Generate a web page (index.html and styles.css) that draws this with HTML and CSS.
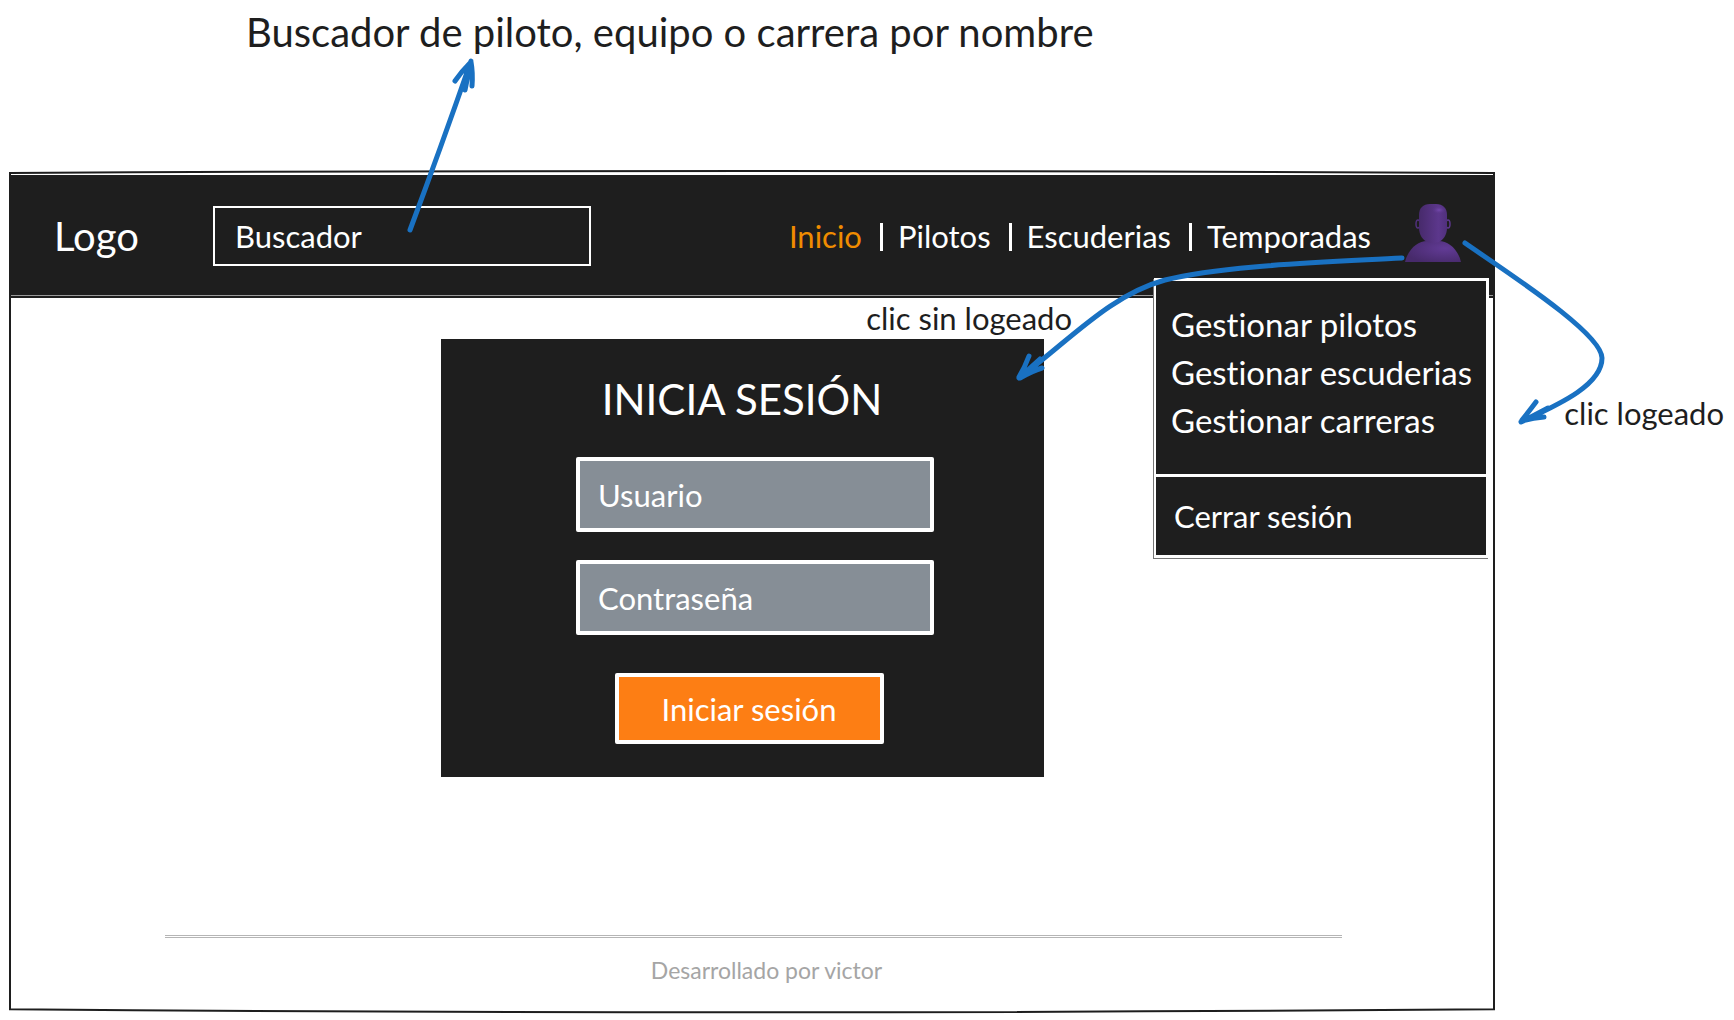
FILE: index.html
```
<!DOCTYPE html>
<html lang="es">
<head>
<meta charset="utf-8">
<meta name="viewport" content="width=device-width, initial-scale=1">
<title>Inicia sesión</title>
<link rel="stylesheet" href="styles.css">
</head>
<body>
<p class="note note-title">Buscador de piloto, equipo o carrera por nombre</p>

<div class="frame">
  <svg class="frame-outline" viewBox="0 0 100 100" preserveAspectRatio="none" aria-hidden="true">
    <path d="M0 0 Q50 -.5 100 0 V99.8 Q50 100.5 0 99.8 Z"/>
  </svg>

  <header class="topbar">
    <a class="logo" href="#">Logo</a>
    <input class="search" type="search" placeholder="Buscador" aria-label="Buscador">
    <nav class="nav">
      <a class="active" href="#">Inicio</a>
      <a href="#">Pilotos</a>
      <a href="#">Escuderias</a>
      <a href="#">Temporadas</a>
    </nav>
    <button class="user" type="button" aria-label="Usuario">
      <svg width="56" height="58" viewBox="0 0 56 58" aria-hidden="true">
        <defs>
          <linearGradient id="head" x1="0" y1="0" x2="1" y2="0">
            <stop offset="0" stop-color="#472a6b"/>
            <stop offset=".7" stop-color="#5c378c"/>
            <stop offset="1" stop-color="#50307c"/>
          </linearGradient>
          <radialGradient id="body" cx=".72" cy=".35" r=".75">
            <stop offset="0" stop-color="#623b96"/>
            <stop offset="1" stop-color="#472a6b"/>
          </radialGradient>
          <radialGradient id="shine">
            <stop offset="0" stop-color="#7448ad"/>
            <stop offset="1" stop-color="#5c378c" stop-opacity="0"/>
          </radialGradient>
        </defs>
        <ellipse cx="13" cy="20" rx="2" ry="4" fill="none" stroke="#50307c" stroke-width="1.5"/>
        <ellipse cx="43" cy="20" rx="2" ry="4" fill="none" stroke="#5c378c" stroke-width="1.5"/>
        <path d="M0 58C3 45 13 37 22 37h12c9 0 19 8 22 21Z" fill="url(#body)"/>
        <path d="M14 11C14 4 18 0 25 0h6c7 0 11 4 11 11v13c0 7-4 12-8 14q-6 2-12 0c-4-2-8-7-8-14Z" fill="url(#head)"/>
        <ellipse cx="34" cy="6" rx="7" ry="4" fill="url(#shine)"/>
      </svg>
    </button>
  </header>

  <div class="menu">
    <ul>
      <li><a href="#">Gestionar pilotos</a></li>
      <li><a href="#">Gestionar escuderias</a></li>
      <li><a href="#">Gestionar carreras</a></li>
    </ul>
    <button type="button">Cerrar sesión</button>
  </div>

  <main>
    <form class="login">
      <h1>INICIA SESIÓN</h1>
      <input type="text" placeholder="Usuario" aria-label="Usuario">
      <input type="password" placeholder="Contraseña" aria-label="Contraseña">
      <button type="button">Iniciar sesión</button>
    </form>
  </main>

  <footer>Desarrollado por victor</footer>

  <svg class="arrow arrow-search" width="80" height="190" viewBox="400 50 80 190" aria-hidden="true">
    <path d="M410 230Q440 150 471 61L465 90M455 81Q461 72 470 63M472 86Q473 73 471 62"/>
  </svg>
  <svg class="arrow arrow-user" width="600" height="200" viewBox="1010 235 600 200" aria-hidden="true">
    <path d="M1402 258C1310 263 1220 266 1165 280C1110 295 1070 340 1019 378L1040 359M1029 356Q1025 367 1019 377M1042 368Q1032 371 1020 378"/>
    <path d="M1465 243C1505 271 1602 333 1602 358C1602 386 1555 406 1521 422L1548 408M1536 402Q1530 410 1522 420M1544 417Q1533 418 1522 421"/>
  </svg>
  <p class="note note-guest">clic sin logeado</p>
  <p class="note note-logged">clic logeado</p>
</div>
</body>
</html>
```
FILE: styles.css
```
* { box-sizing: border-box; }

body {
  margin: 0;
  padding: 0 10px 8px;
  min-height: 100vh;
  display: flex;
  flex-direction: column;
  background: #fff;
  color: #1e1e1e;
  font-family: Excalifont, Lato, sans-serif;
  font-size: 31px;
  line-height: 36px;
  font-variant-ligatures: none;
}

a { color: inherit; text-decoration: none; }
p, h1, ul { margin: 0; padding: 0; font-weight: 400; }
ul { list-style: none; }
input, button { font: inherit; color: inherit; font-variant-ligatures: none; }
input::placeholder { color: #fff; opacity: 1; }

.note-title {
  padding: 8px 0 116px 236px;
  font-size: 40px;
  line-height: 48px;
}

/* Wireframe window */
.frame {
  position: relative;
  flex: 1;
  display: flex;
  flex-direction: column;
  margin-right: 230px;
}

.frame-outline {
  position: absolute;
  inset: 1px 0;
  width: 100%;
  height: calc(100% - 2px);
  overflow: visible;
  pointer-events: none;
}

.frame-outline path {
  fill: none;
  stroke: #1e1e1e;
  stroke-width: 2px;
  vector-effect: non-scaling-stroke;
}

.topbar {
  display: flex;
  align-items: center;
  margin-top: 3px;
  padding: 2px 33px 0 44px;
  height: 120px;
  background: #1e1e1e;
  box-shadow: 0 1px #999, 0 3px #1e1e1e;
  color: #fff;
}

.logo { width: 159px; font-size: 40px; }

.search {
  width: 378px;
  height: 60px;
  padding: 0 20px;
  border: 2px solid #fff;
  background: transparent;
}

.nav { display: flex; margin-left: auto; }
.nav a + a { margin-left: 18px; padding-left: 18px; position: relative; }
.nav a + a::before {
  content: "";
  position: absolute;
  left: 0;
  top: 5px;
  width: 3px;
  height: 28px;
  background: #fff;
}
.nav .active { color: #f08c00; }

.user {
  display: flex;
  margin: 0 0 6px 34px;
  padding: 0;
  border: 0;
  background: none;
}

.menu {
  position: absolute;
  top: 106px;
  right: 5px;
  width: 335px;
  border: 3px solid #fff;
  border-left-width: 2px;
  box-shadow: -1px 1px #777;
  background: #1e1e1e;
  color: #fff;
  font-size: 33px;
  white-space: nowrap;
}

.menu ul {
  display: flex;
  flex-direction: column;
  gap: 12px;
  padding: 25px 15px 36px;
  border-bottom: 3px solid #fff;
}

.menu button {
  display: block;
  width: 100%;
  padding: 21px 18px;
  border: 0;
  background: none;
  font-size: 31px;
  text-align: left;
}

main { display: flex; justify-content: center; padding: 44px 20px 0 0; }

.login {
  display: flex;
  flex-direction: column;
  align-items: center;
  width: 603px;
  padding: 36px 0 33px;
  background: #1e1e1e;
  color: #fff;
}

.login h1 { margin-bottom: 34px; font-size: 42px; line-height: 48px; }

.login input {
  width: 358px;
  height: 75px;
  margin: 0 0 28px 26px;
  padding: 0 18px;
  border: 4px solid #fff;
  border-radius: 2px;
  background: #868e96;
}

.login button {
  width: 269px;
  height: 71px;
  margin: 10px 0 0 14px;
  border: 4px solid #fff;
  border-radius: 2px;
  background: #fd7e14;
}

footer {
  margin: auto 152px 24px 155px;
  padding: 14px 0 0 26px;
  border-top: 3px double #b5b5b5;
  color: #a5a5a5;
  font-size: 23px;
  line-height: 36px;
  text-align: center;
}

/* Annotations drawn over the wireframe */
.arrow {
  position: absolute;
  fill: none;
  stroke: #1971c2;
  stroke-width: 5px;
  stroke-linecap: round;
  stroke-linejoin: round;
  pointer-events: none;
}

.arrow-search { left: 390px; top: -122px; }
.arrow-user { right: -116px; top: 63px; }

.note-guest, .note-logged { position: absolute; white-space: nowrap; }
.note-guest { right: 422px; top: 128px; }
.note-logged { right: -230px; top: 223px; }
```
